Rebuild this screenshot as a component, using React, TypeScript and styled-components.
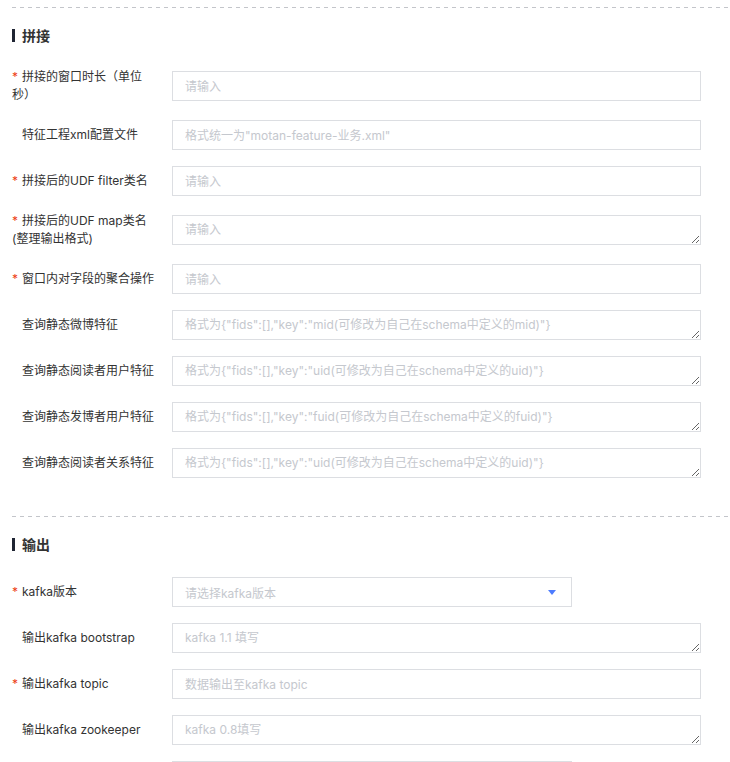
import styled, { createGlobalStyle } from "styled-components";

const FONT = `Inter, "Noto Sans CJK SC", "Noto Sans", sans-serif`;

const GlobalStyle = createGlobalStyle`
  html, body {
    margin: 0;
    padding: 0;
    background: #fff;
    overflow: hidden;
  }
  body {
    font-family: ${FONT};
    color: #333;
  }
`;

const Page = styled.div`
  padding: 7px 0 0 12px;
`;

const Section = styled.section`
  padding-bottom: 22px;
`;

const Divider = styled.div`
  height: 1px;
  background-image: linear-gradient(to right, #c3c5ca 0 4px, transparent 4px 8px);
  background-size: 8px 1px;
  background-repeat: repeat-x;
`;

const Title = styled.h3`
  display: flex;
  align-items: center;
  gap: 7px;
  height: 20px;
  margin: 17px 0 23px;
  font-size: 14px;
  font-weight: 700;
  color: #333;

  &::before {
    content: "";
    width: 3px;
    height: 13px;
    background: #1f2533;
  }
`;

const Row = styled.div`
  display: flex;
  align-items: center;
  margin-bottom: 16px;
`;

interface ILabel {
  $required?: boolean;
}
const Label = styled.label<ILabel>`
  flex-shrink: 0;
  box-sizing: border-box;
  width: 148px;
  margin-right: 12px;
  padding-left: ${(props) => (props.$required ? "0" : "10px")};
  font-size: 12px;
  line-height: 18px;
  color: #333;
`;

const Star = styled.span`
  display: inline-block;
  width: 10px;
  color: #ed4014;
  font-size: 12px;
`;

const fieldBase = `
  box-sizing: border-box;
  width: 529px;
  height: 30px;
  margin: 0;
  border: 1px solid #dcdee2;
  border-radius: 0;
  background: #fff;
  font-family: ${FONT};
  font-size: 12px;
  color: #333;
  outline: none;

  &::placeholder {
    color: #c5c8ce;
  }
`;

const Input = styled.input`
  ${fieldBase}
  padding: 0 12px;
`;

const TextArea = styled.textarea`
  ${fieldBase}
  display: block;
  padding: 6px 12px;
  line-height: 16px;
  resize: both;
  overflow: hidden;
`;

const Select = styled.div`
  box-sizing: border-box;
  display: flex;
  align-items: center;
  justify-content: space-between;
  width: 400px;
  height: 30px;
  padding: 0 15px 0 12px;
  border: 1px solid #dcdee2;
  background: #fff;
  font-size: 12px;
  color: #c5c8ce;
  cursor: pointer;
`;

const Caret = styled.span`
  width: 0;
  height: 0;
  border-left: 4px solid transparent;
  border-right: 4px solid transparent;
  border-top: 5px solid #4d7cfe;
`;

interface IField {
  label: string;
  required?: boolean;
  kind: "input" | "textarea" | "select";
  placeholder: string;
}

const joinFields: IField[] = [
  { label: "拼接的窗口时长（单位秒）", required: true, kind: "input", placeholder: "请输入" },
  { label: "特征工程xml配置文件", kind: "input", placeholder: '格式统一为"motan-feature-业务.xml"' },
  { label: "拼接后的UDF filter类名", required: true, kind: "input", placeholder: "请输入" },
  { label: "拼接后的UDF map类名(整理输出格式)", required: true, kind: "textarea", placeholder: "请输入" },
  { label: "窗口内对字段的聚合操作", required: true, kind: "input", placeholder: "请输入" },
  {
    label: "查询静态微博特征",
    kind: "textarea",
    placeholder: '格式为{"fids":[],"key":"mid(可修改为自己在schema中定义的mid)"}',
  },
  {
    label: "查询静态阅读者用户特征",
    kind: "textarea",
    placeholder: '格式为{"fids":[],"key":"uid(可修改为自己在schema中定义的uid)"}',
  },
  {
    label: "查询静态发博者用户特征",
    kind: "textarea",
    placeholder: '格式为{"fids":[],"key":"fuid(可修改为自己在schema中定义的fuid)"}',
  },
  {
    label: "查询静态阅读者关系特征",
    kind: "textarea",
    placeholder: '格式为{"fids":[],"key":"uid(可修改为自己在schema中定义的uid)"}',
  },
];

const outputFields: IField[] = [
  { label: "kafka版本", required: true, kind: "select", placeholder: "请选择kafka版本" },
  { label: "输出kafka bootstrap", kind: "textarea", placeholder: "kafka 1.1 填写" },
  { label: "输出kafka topic", required: true, kind: "input", placeholder: "数据输出至kafka topic" },
  { label: "输出kafka zookeeper", kind: "textarea", placeholder: "kafka 0.8填写" },
  { label: "输出数据格式", required: true, kind: "select", placeholder: "请选择输出数据格式" },
];

const FormRow = ({ field }: { field: IField }) => (
  <Row>
    <Label $required={field.required}>
      {field.required && <Star>*</Star>}
      {field.label}
    </Label>
    {field.kind === "input" && <Input placeholder={field.placeholder} />}
    {field.kind === "textarea" && <TextArea rows={1} placeholder={field.placeholder} />}
    {field.kind === "select" && (
      <Select>
        <span>{field.placeholder}</span>
        <Caret />
      </Select>
    )}
  </Row>
);

const App = () => {
  return (
    <Page>
      <GlobalStyle />
      <Section>
        <Divider />
        <Title>拼接</Title>
        {joinFields.map((f) => (
          <FormRow key={f.label} field={f} />
        ))}
      </Section>
      <Section>
        <Divider />
        <Title>输出</Title>
        {outputFields.map((f) => (
          <FormRow key={f.label} field={f} />
        ))}
      </Section>
    </Page>
  );
};

export default App;
